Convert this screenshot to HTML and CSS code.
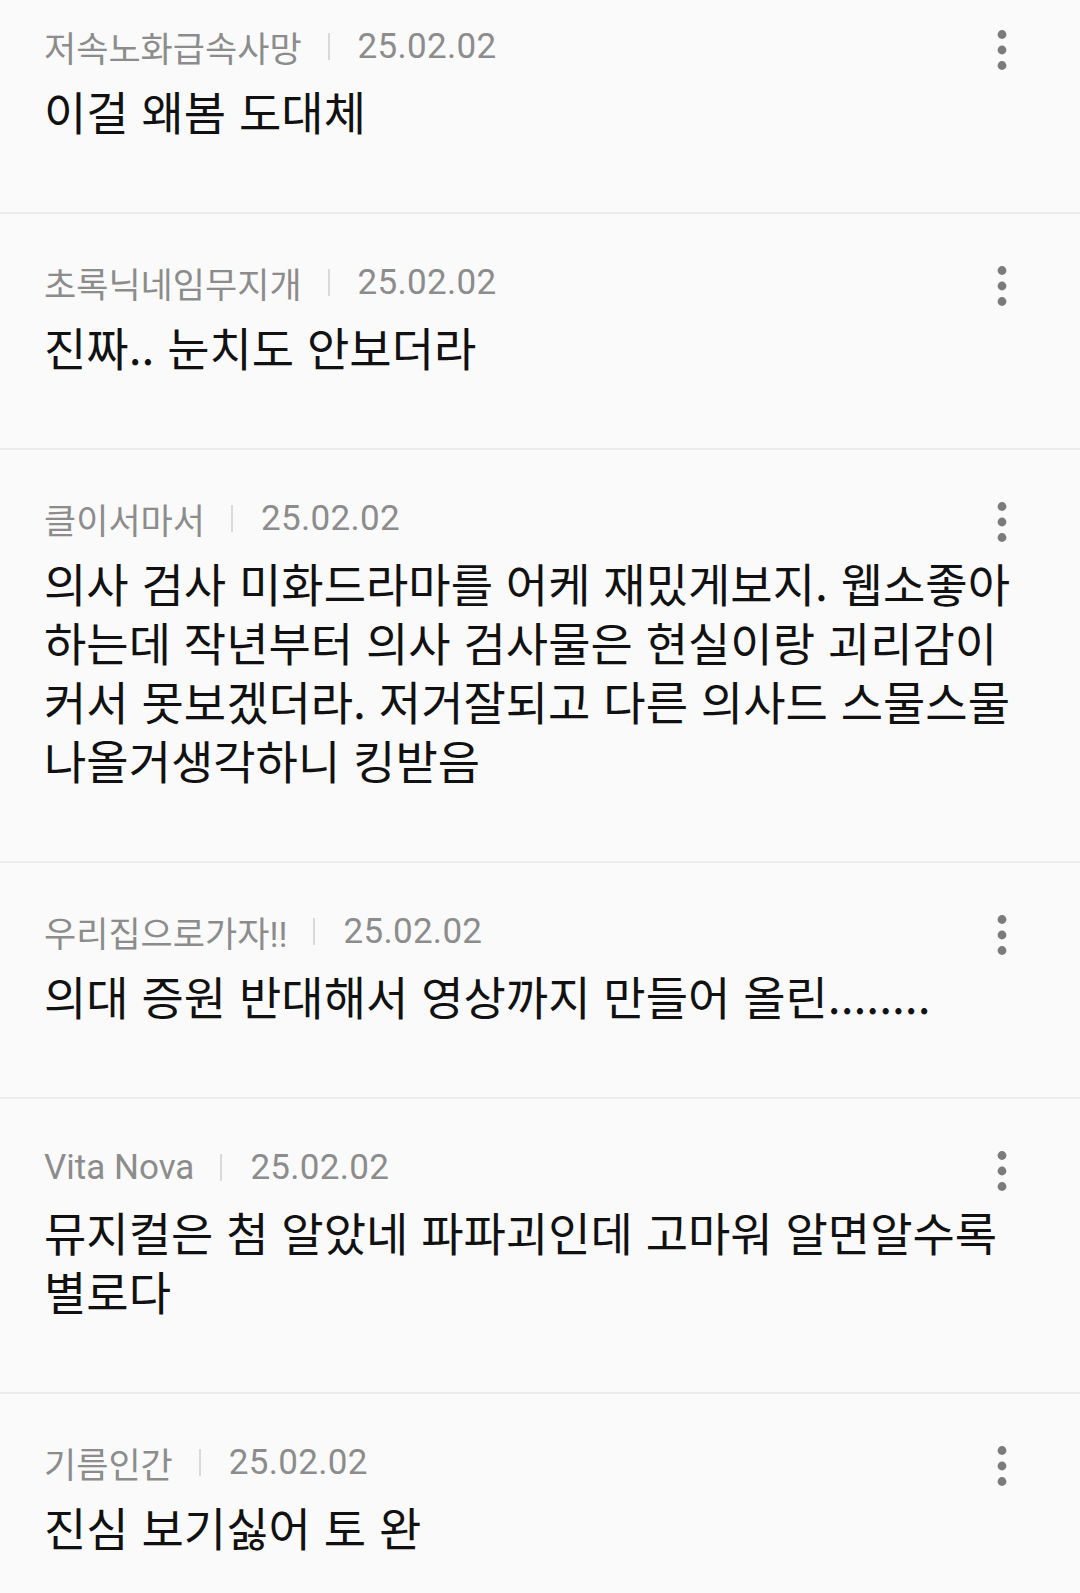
FILE: index.html
```html
<!DOCTYPE html>
<html lang="ko">
<head>
    <meta charset="UTF-8">
    <title>댓글</title>
    <link rel="stylesheet" href="styles.css">
</head>
<body>
<ul class="comment-list">
    <li class="comment">
        <div class="comment-meta">
            <span class="nick">저속노화급속사망</span>
            <span class="divider"></span>
            <span class="date">25.02.02</span>
            <button class="more" type="button">
                <svg width="12" height="40" viewBox="0 0 12 40"><circle cx="6" cy="4.5" r="4.4"/><circle cx="6" cy="20" r="4.4"/><circle cx="6" cy="35.5" r="4.4"/></svg>
            </button>
        </div>
        <p class="comment-text">이걸 왜봄 도대체</p>
    </li>
    <li class="comment">
        <div class="comment-meta">
            <span class="nick">초록닉네임무지개</span>
            <span class="divider"></span>
            <span class="date">25.02.02</span>
            <button class="more" type="button">
                <svg width="12" height="40" viewBox="0 0 12 40"><circle cx="6" cy="4.5" r="4.4"/><circle cx="6" cy="20" r="4.4"/><circle cx="6" cy="35.5" r="4.4"/></svg>
            </button>
        </div>
        <p class="comment-text">진짜.. 눈치도 안보더라</p>
    </li>
    <li class="comment">
        <div class="comment-meta">
            <span class="nick">클이서마서</span>
            <span class="divider"></span>
            <span class="date">25.02.02</span>
            <button class="more" type="button">
                <svg width="12" height="40" viewBox="0 0 12 40"><circle cx="6" cy="4.5" r="4.4"/><circle cx="6" cy="20" r="4.4"/><circle cx="6" cy="35.5" r="4.4"/></svg>
            </button>
        </div>
        <p class="comment-text">의사 검사 미화드라마를 어케 재밌게보지. 웹소좋아<br>하는데 작년부터 의사 검사물은 현실이랑 괴리감이<br>커서 못보겠더라. 저거잘되고 다른 의사드 스물스물<br>나올거생각하니 킹받음</p>
    </li>
    <li class="comment">
        <div class="comment-meta">
            <span class="nick">우리집으로가자!!</span>
            <span class="divider"></span>
            <span class="date">25.02.02</span>
            <button class="more" type="button">
                <svg width="12" height="40" viewBox="0 0 12 40"><circle cx="6" cy="4.5" r="4.4"/><circle cx="6" cy="20" r="4.4"/><circle cx="6" cy="35.5" r="4.4"/></svg>
            </button>
        </div>
        <p class="comment-text">의대 증원 반대해서 영상까지 만들어 올린........</p>
    </li>
    <li class="comment">
        <div class="comment-meta">
            <span class="nick">Vita Nova</span>
            <span class="divider"></span>
            <span class="date">25.02.02</span>
            <button class="more" type="button">
                <svg width="12" height="40" viewBox="0 0 12 40"><circle cx="6" cy="4.5" r="4.4"/><circle cx="6" cy="20" r="4.4"/><circle cx="6" cy="35.5" r="4.4"/></svg>
            </button>
        </div>
        <p class="comment-text">뮤지컬은 첨 알았네 파파괴인데 고마워 알면알수록<br>별로다</p>
    </li>
    <li class="comment">
        <div class="comment-meta">
            <span class="nick">기름인간</span>
            <span class="divider"></span>
            <span class="date">25.02.02</span>
            <button class="more" type="button">
                <svg width="12" height="40" viewBox="0 0 12 40"><circle cx="6" cy="4.5" r="4.4"/><circle cx="6" cy="20" r="4.4"/><circle cx="6" cy="35.5" r="4.4"/></svg>
            </button>
        </div>
        <p class="comment-text">진심 보기싫어 토 완</p>
    </li>
</ul>
</body>
</html>
```

FILE: styles.css
```css
html {
    overflow: hidden;
}

body {
    margin: 0;
    background-color: #fafafa;
    font-family: Roboto, "Noto Sans CJK KR", sans-serif;
}

.comment-list {
    list-style: none;
    margin: -22px 0 0 0;
    padding: 0;
}

.comment {
    padding: 44px 44px 72px 44px;
    border-bottom: solid 2px #ececec;
}

.comment-meta {
    display: flex;
    align-items: center;
    height: 48px;
    font-size: 35px;
    color: #8c8c8c;
}

.nick {
    white-space: nowrap;
}

.divider {
    width: 2px;
    height: 27px;
    margin: 0 28px 0 26px;
    background-color: #d9d9d9;
}

.date {
    letter-spacing: 0.3px;
}

.more {
    margin: 8px 14px 0 auto;
    width: 40px;
    height: 40px;
    padding: 0;
    border: none;
    background: none;
    display: flex;
    justify-content: center;
    fill: #7b7b7b;
}

.comment-text {
    margin: 11px 0 0 0;
    font-family: "Noto Sans CJK KR", sans-serif;
    font-size: 46px;
    line-height: 59px;
    color: #111;
}
```
